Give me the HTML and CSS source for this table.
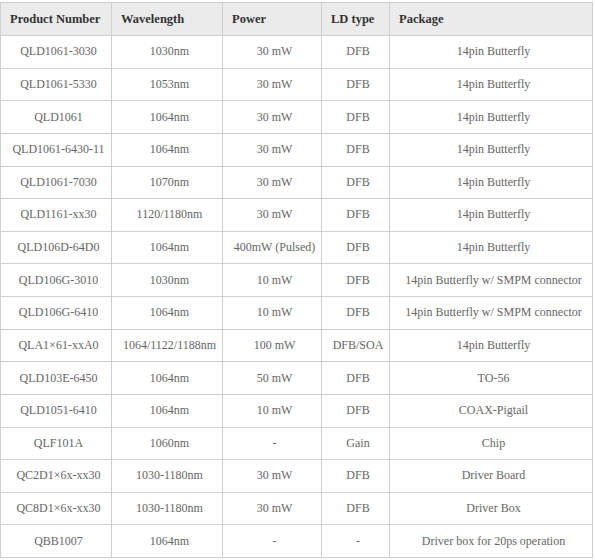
FILE: index.html
```html
<!DOCTYPE html>
<html>
<head>
<meta charset="utf-8">
<link rel="stylesheet" href="styles.css">
</head>
<body>
<table class="spec">
  <colgroup>
    <col class="c1"><col class="c2"><col class="c3"><col class="c4"><col class="c5">
  </colgroup>
  <thead>
    <tr><th>Product Number</th><th>Wavelength</th><th>Power</th><th>LD type</th><th>Package</th></tr>
  </thead>
  <tbody>
    <tr><td>QLD1061-3030</td><td>1030nm</td><td>30 mW</td><td>DFB</td><td>14pin Butterfly</td></tr>
    <tr><td>QLD1061-5330</td><td>1053nm</td><td>30 mW</td><td>DFB</td><td>14pin Butterfly</td></tr>
    <tr><td>QLD1061</td><td>1064nm</td><td>30 mW</td><td>DFB</td><td>14pin Butterfly</td></tr>
    <tr><td>QLD1061-6430-11</td><td>1064nm</td><td>30 mW</td><td>DFB</td><td>14pin Butterfly</td></tr>
    <tr><td>QLD1061-7030</td><td>1070nm</td><td>30 mW</td><td>DFB</td><td>14pin Butterfly</td></tr>
    <tr><td>QLD1161-xx30</td><td>1120/1180nm</td><td>30 mW</td><td>DFB</td><td>14pin Butterfly</td></tr>
    <tr><td>QLD106D-64D0</td><td>1064nm</td><td>400mW (Pulsed)</td><td>DFB</td><td>14pin Butterfly</td></tr>
    <tr><td>QLD106G-3010</td><td>1030nm</td><td>10 mW</td><td>DFB</td><td>14pin Butterfly w/ SMPM connector</td></tr>
    <tr><td>QLD106G-6410</td><td>1064nm</td><td>10 mW</td><td>DFB</td><td>14pin Butterfly w/ SMPM connector</td></tr>
    <tr><td>QLA1×61-xxA0</td><td>1064/1122/1188nm</td><td>100 mW</td><td>DFB/SOA</td><td>14pin Butterfly</td></tr>
    <tr><td>QLD103E-6450</td><td>1064nm</td><td>50 mW</td><td>DFB</td><td>TO-56</td></tr>
    <tr><td>QLD1051-6410</td><td>1064nm</td><td>10 mW</td><td>DFB</td><td>COAX-Pigtail</td></tr>
    <tr><td>QLF101A</td><td>1060nm</td><td>-</td><td>Gain</td><td>Chip</td></tr>
    <tr><td>QC2D1×6x-xx30</td><td>1030-1180nm</td><td>30 mW</td><td>DFB</td><td>Driver Board</td></tr>
    <tr><td>QC8D1×6x-xx30</td><td>1030-1180nm</td><td>30 mW</td><td>DFB</td><td>Driver Box</td></tr>
    <tr><td>QBB1007</td><td>1064nm</td><td>-</td><td>-</td><td>Driver box for 20ps operation</td></tr>
  </tbody>
</table>
</body>
</html>
```

FILE: styles.css
```css
html, body {
  margin: 0;
  padding: 0;
  background: #fff;
}
body {
  padding-top: 2px;
  font-family: "Liberation Serif", "Times New Roman", serif;
}
.spec {
  border-collapse: collapse;
  table-layout: fixed;
  width: 592px;
}
.c1 { width: 111px; }
.c2 { width: 111px; }
.c3 { width: 99px; }
.c4 { width: 68px; }
.c5 { width: 203px; }
.spec th,
.spec td {
  border: 1px solid #cfcfcf;
  padding: 0;
  white-space: nowrap;
  overflow: hidden;
}
.spec th {
  height: 32px;
  background: #ebebeb;
  color: #333;
  font-size: 12.5px;
  font-weight: bold;
  text-align: left;
  padding-left: 9px;
}
.spec td {
  height: 31.625px;
  color: #666;
  font-size: 12px;
  text-align: center;
  padding-left: 5px;
}
```
